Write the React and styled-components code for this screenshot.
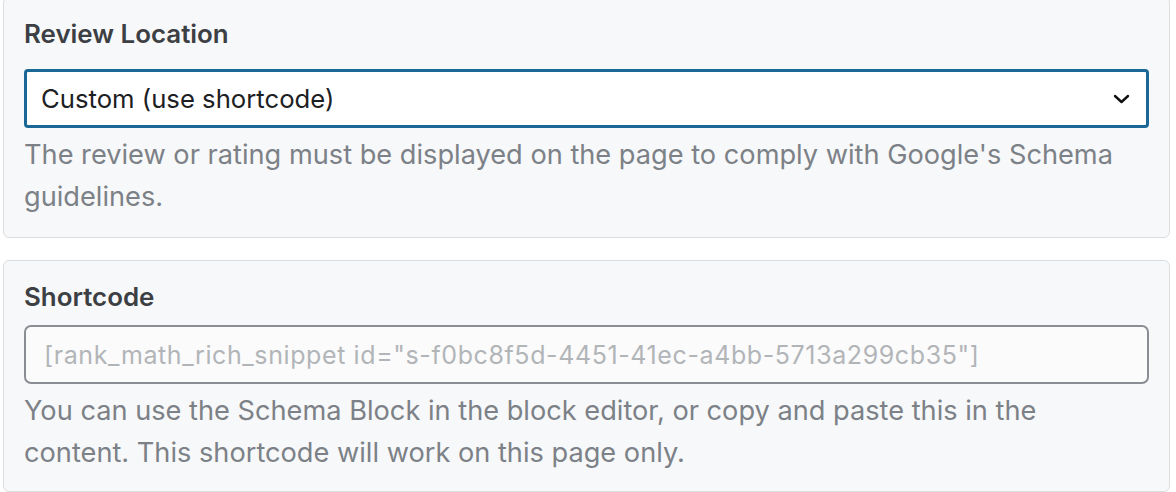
import React from 'react';
import styled, { createGlobalStyle } from 'styled-components';

// --- Global ---
const GlobalStyle = createGlobalStyle`
  html, body {
    margin: 0;
    padding: 0;
    background: #ffffff;
  }
  body {
    font-family: Inter, "Open Sans", "Liberation Sans", sans-serif;
    -webkit-font-smoothing: antialiased;
  }
`;

// --- Styled Components ---
const Page = styled.div`
  display: flex;
  flex-direction: column;
  gap: 22px;
  margin-top: -3px;
  padding: 0 6px 0 3px;
`;

const Card = styled.section`
  background: #f7f8f9;
  border: 1px solid #dcdddf;
  border-radius: 6px;
  padding: 20px 20px ${({ $bottom }) => $bottom || 20}px 20px;
`;

const Label = styled.div`
  font-size: 25.9px;
  font-weight: 600;
  line-height: 32px;
  color: #3c3f43;
  margin-bottom: ${({ $gap }) => $gap}px;
`;

const SelectBox = styled.div`
  display: flex;
  align-items: center;
  height: 59px;
  box-sizing: border-box;
  padding: 0 16px 0 14px;
  background: #ffffff;
  border: 3px solid #1b6796;
  border-radius: 4px;
  font-size: 25.7px;
  color: #1d2023;
`;

const SelectValue = styled.span`
  flex: 1;
`;

const Chevron = styled.svg`
  width: 17px;
  height: 10px;
`;

const Input = styled.input`
  display: block;
  width: 100%;
  height: 59px;
  box-sizing: border-box;
  padding: 0 18px;
  background: #fbfbfc;
  border: 2px solid #8a8e93;
  border-radius: 7px;
  font-family: inherit;
  font-size: 25px;
  letter-spacing: 0.6px;
  color: #3c3f43;
  outline: none;

  &::placeholder {
    color: #b2b5b8;
  }
`;

const Help = styled.p`
  margin: 6px 0 0;
  padding-right: 4px;
  font-size: 27.2px;
  line-height: 41.5px;
  color: #7c8187;
`;

const App = () => (
  <>
    <GlobalStyle />
    <Page>
      <Card>
        <Label $gap={19}>Review Location</Label>
        <SelectBox>
          <SelectValue>Custom (use shortcode)</SelectValue>
          <Chevron viewBox="0 0 17 10" fill="none">
            <path d="M2 2l6.5 6 6.5-6" stroke="#111" strokeWidth="2.4" strokeLinecap="round" strokeLinejoin="round" />
          </Chevron>
        </SelectBox>
        <Help>
          The review or rating must be displayed on the page to comply with Google's Schema guidelines.
        </Help>
      </Card>
      <Card $bottom={18}>
        <Label $gap={12}>Shortcode</Label>
        <Input
          type="text"
          readOnly
          placeholder={'[rank_math_rich_snippet id="s-f0bc8f5d-4451-41ec-a4bb-5713a299cb35"]'}
        />
        <Help>
          You can use the Schema Block in the block editor, or copy and paste this in the content. This shortcode will work on this page only.
        </Help>
      </Card>
    </Page>
  </>
);

export default App;
